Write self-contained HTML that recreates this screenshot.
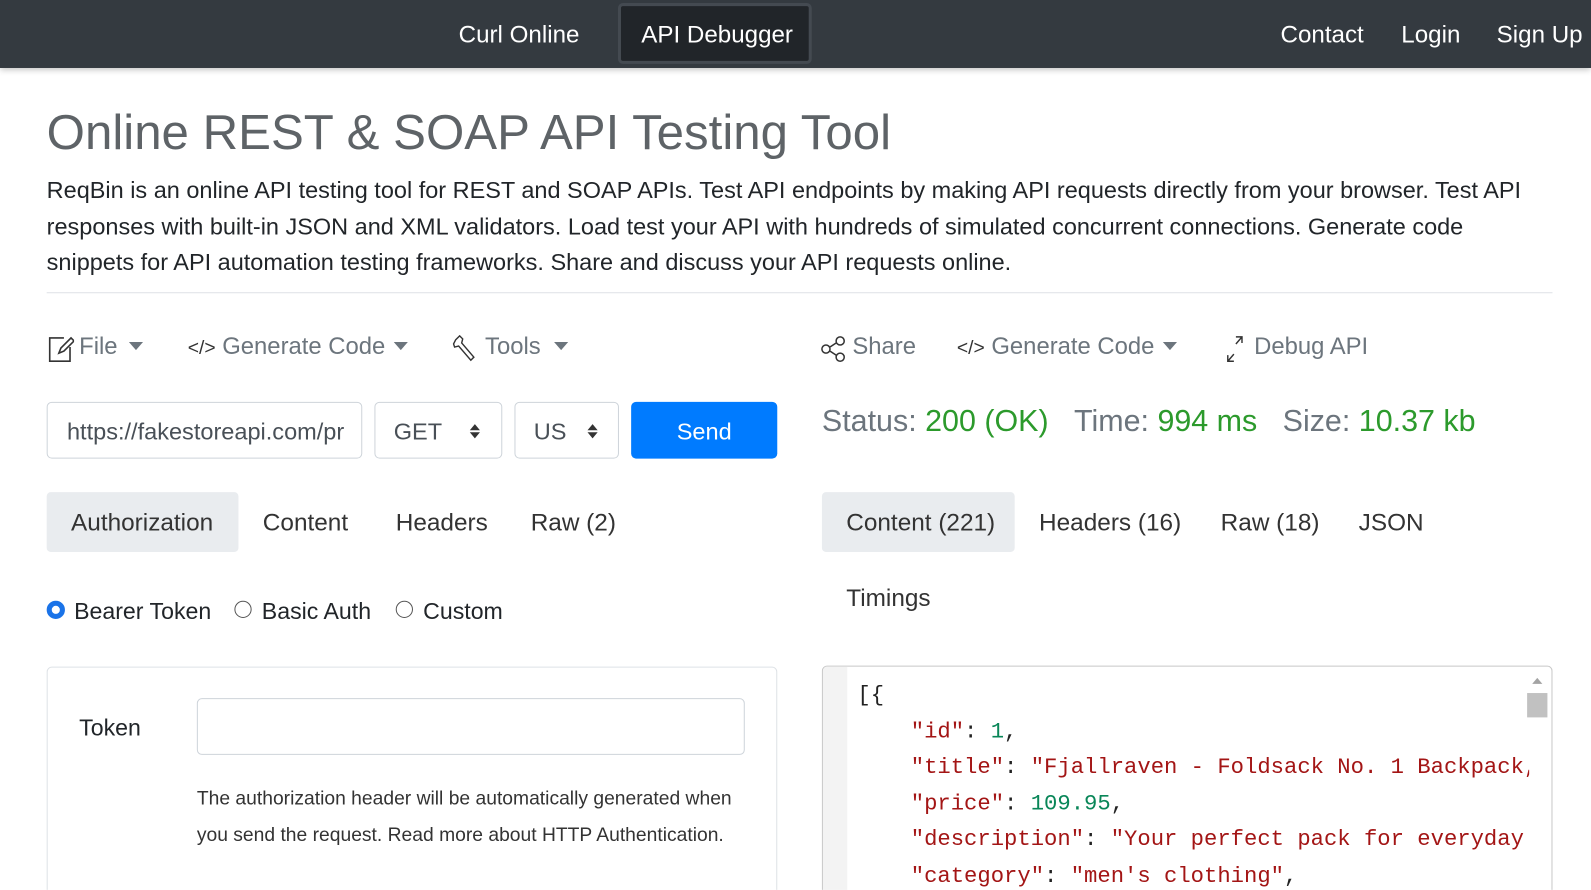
<!DOCTYPE html>
<html style="width:1591px;height:890px;overflow:hidden"><head><meta charset="utf-8"><style>
*{box-sizing:border-box;margin:0;padding:0}
body{width:1591px;height:890px;overflow:hidden;background:#fff;font-family:"Liberation Sans",sans-serif;color:#212529;position:relative}
#w{position:absolute;left:0;top:0;width:1568px;height:877px;overflow:hidden;transform:scale(1.0147);transform-origin:0 0}
.a{position:absolute;white-space:nowrap}
.nav{position:absolute;left:0;top:0;width:1568px;height:67px;background:#343a40;box-shadow:0 2px 6px rgba(0,0,0,.25)}
.nav .a{color:#fff;font-size:23.8px;top:21px}
.act{position:absolute;left:609px;top:3px;width:191px;height:60px;background:#212529;border:3px solid #444a51;border-radius:5px}
.g{color:#6c757d;font-size:23.5px}
.box{position:absolute;border:1px solid #ced4da;border-radius:5px;background:#fff}
.tab{position:absolute;background:#e9ecef;border-radius:4px}
.t{font-size:24px;color:#333;top:502px}
.mono{font-family:"Liberation Mono",monospace;font-size:21.9px;color:#a31515}
.n{color:#098658}.k{color:#222}
</style></head><body><div id="w">
<div class="nav">
<div class="act"></div>
<div class="a" style="left:452px">Curl Online</div>
<div class="a" style="left:632px">API Debugger</div>
<div class="a" style="left:1262px">Contact</div>
<div class="a" style="left:1381px">Login</div>
<div class="a" style="left:1475px">Sign Up</div>
</div>
<div class="a" style="left:46px;top:103px;font-size:48.5px;color:#5e6367">Online REST &amp; SOAP API Testing Tool</div>
<div class="a" style="left:46px;top:170px;font-size:23.15px;line-height:35.5px;color:#212529">ReqBin is an online API testing tool for REST and SOAP APIs. Test API endpoints by making API requests directly from your browser. Test API<br>responses with built-in JSON and XML validators. Load test your API with hundreds of simulated concurrent connections. Generate code<br>snippets for API automation testing frameworks. Share and discuss your API requests online.</div>
<div class="a" style="left:46px;top:288px;width:1484px;height:1px;background:#dee2e6"></div>

<svg class="a" style="left:47px;top:330px" width="26" height="28" viewBox="0 0 26 28" fill="none" stroke="#333" stroke-width="1.6"><path d="M16 3H2v23h20V12"/><path d="M11 18l2-5 10-10 3 3-10 10z"/></svg>
<div class="a g" style="left:78px;top:328px">File</div>
<svg class="a" style="left:127px;top:337px" width="14" height="8"><path d="M0 0h14L7 8z" fill="#6c757d"/></svg>
<div class="a g" style="left:185px;top:328px"><span style="font-size:19px;color:#333">&lt;/&gt;</span> Generate Code</div>
<svg class="a" style="left:388px;top:337px" width="14" height="8"><path d="M0 0h14L7 8z" fill="#6c757d"/></svg>
<svg class="a" style="left:446px;top:330px" width="26" height="28" viewBox="0 0 26 28" fill="none" stroke="#333" stroke-width="1.4"><path d="M3 5l4-4 3 3-1 4 12 14-3 3L6 11 2 12 1 9z"/></svg>
<div class="a g" style="left:478px;top:328px">Tools</div>
<svg class="a" style="left:546px;top:337px" width="14" height="8"><path d="M0 0h14L7 8z" fill="#6c757d"/></svg>

<div class="box" style="left:46px;top:396px;width:311px;height:56px"></div>
<div class="a" style="left:66px;top:412px;font-size:23.2px;color:#495057;width:273px;overflow:hidden">https://fakestoreapi.com/products</div>
<div class="box" style="left:369px;top:396px;width:126px;height:56px"></div>
<div class="a" style="left:388px;top:412px;font-size:23.2px;color:#495057">GET</div>
<svg class="a" style="left:462px;top:417px" width="12" height="16"><path d="M1 7L6 1l5 6zM1 9h10l-5 6z" fill="#333"/></svg>
<div class="box" style="left:507px;top:396px;width:103px;height:56px"></div>
<div class="a" style="left:526px;top:412px;font-size:23.2px;color:#495057">US</div>
<svg class="a" style="left:578px;top:417px" width="12" height="16"><path d="M1 7L6 1l5 6zM1 9h10l-5 6z" fill="#333"/></svg>
<div class="a" style="left:622px;top:396px;width:144px;height:56px;background:#007bff;border-radius:5px;color:#fff;font-size:23.2px;text-align:center;line-height:58px">Send</div>

<div class="tab" style="left:46px;top:485px;width:189px;height:59px"></div>
<div class="a t" style="left:70px">Authorization</div>
<div class="a t" style="left:259px">Content</div>
<div class="a t" style="left:390px">Headers</div>
<div class="a t" style="left:523px">Raw (2)</div>

<div class="a" style="left:46px;top:592px;width:18px;height:18px;border-radius:50%;border:5px solid #1a73e8"></div>
<div class="a" style="left:73px;top:589px;font-size:22.8px">Bearer Token</div>
<div class="a" style="left:231px;top:592px;width:17px;height:17px;border-radius:50%;border:1px solid #555"></div>
<div class="a" style="left:258px;top:589px;font-size:22.8px">Basic Auth</div>
<div class="a" style="left:390px;top:592px;width:17px;height:17px;border-radius:50%;border:1px solid #555"></div>
<div class="a" style="left:417px;top:589px;font-size:22.8px">Custom</div>

<div class="box" style="left:46px;top:657px;width:720px;height:260px;border-color:#dee2e6"></div>
<div class="a" style="left:78px;top:704px;font-size:22.8px">Token</div>
<div class="box" style="left:194px;top:688px;width:540px;height:56px"></div>
<div class="a" style="left:194px;top:770px;font-size:19px;line-height:36px;color:#333">The authorization header will be automatically generated when<br>you send the request. Read more about HTTP Authentication.</div>

<svg class="a" style="left:809px;top:331px" width="26" height="26" viewBox="0 0 26 26" fill="none" stroke="#333" stroke-width="1.5"><circle cx="5" cy="13" r="4"/><circle cx="19" cy="5" r="4"/><circle cx="19" cy="21" r="4"/><path d="M9 11l6-4M9 15l6 4"/></svg>
<div class="a g" style="left:840px;top:328px">Share</div>
<div class="a g" style="left:943px;top:328px"><span style="font-size:19px;color:#333">&lt;/&gt;</span> Generate Code</div>
<svg class="a" style="left:1146px;top:337px" width="14" height="8"><path d="M0 0h14L7 8z" fill="#6c757d"/></svg>
<svg class="a" style="left:1208px;top:330px" width="18" height="28" viewBox="0 0 18 28" fill="none" stroke="#333" stroke-width="1.4"><path d="M10 2h6v6M16 2L10 9M2 20v6h6M2 26l6-7"/></svg>
<div class="a g" style="left:1236px;top:328px">Debug API</div>

<div class="a" style="left:810px;top:399px;font-size:30px;color:#6c757d">Status: <span style="color:#2c9a2c">200 (OK)</span>&nbsp;&nbsp;&nbsp;Time: <span style="color:#2c9a2c">994 ms</span>&nbsp;&nbsp;&nbsp;Size: <span style="color:#2c9a2c">10.37 kb</span></div>

<div class="tab" style="left:810px;top:485px;width:190px;height:59px"></div>
<div class="a t" style="left:834px">Content (221)</div>
<div class="a t" style="left:1024px">Headers (16)</div>
<div class="a t" style="left:1203px">Raw (18)</div>
<div class="a t" style="left:1339px">JSON</div>
<div class="a t" style="left:834px;top:576px">Timings</div>

<div class="box" style="left:810px;top:656px;width:720px;height:260px;border-color:#c8c8c8;overflow:hidden">
<div style="position:absolute;left:0;top:0;width:24px;height:260px;background:#f3f3f3"></div>
<div style="position:absolute;right:4px;top:26px;width:20px;height:24px;background:#c1c1c1"></div>
<svg style="position:absolute;right:8px;top:10px" width="12" height="8"><path d="M1 7L6 1l5 6z" fill="#a3a3a3"/></svg>
</div>
<div class="a mono" style="left:845px;top:668px;line-height:35.5px;width:662px;overflow:hidden"><span class="k">[{</span><br>&nbsp;&nbsp;&nbsp;&nbsp;"id"<span class="k">: </span><span class="n">1</span><span class="k">,</span><br>&nbsp;&nbsp;&nbsp;&nbsp;"title"<span class="k">: </span>"Fjallraven - Foldsack No. 1 Backpack, Fits 15 Laptops"<br>&nbsp;&nbsp;&nbsp;&nbsp;"price"<span class="k">: </span><span class="n">109.95</span><span class="k">,</span><br>&nbsp;&nbsp;&nbsp;&nbsp;"description"<span class="k">: </span>"Your perfect pack for everyday use"<br>&nbsp;&nbsp;&nbsp;&nbsp;"category"<span class="k">: </span>"men's clothing"<span class="k">,</span></div>
</div></body></html>
